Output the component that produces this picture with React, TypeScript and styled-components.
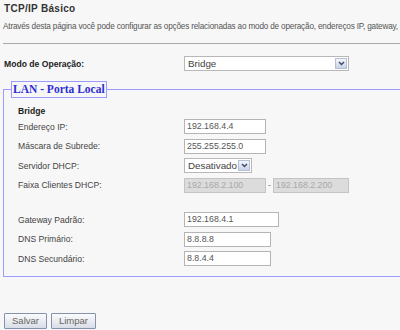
import { createGlobalStyle, styled } from 'styled-components'

const Global = createGlobalStyle`
  html, body {
    margin: 0;
    background: #f7f7f7;
    overflow: hidden;
  }
  body {
    font-family: "Liberation Sans", Arial, sans-serif;
    color: #444;
  }
`

const Page = styled.div`
  width: 600px;
  padding: 3px 0 0 3px;
`

const Title = styled.div`
  font-size: 10px;
  font-weight: bold;
  line-height: 12px;
  color: #333;
  letter-spacing: 0.3px;
  padding-left: 1px;
`

const Desc = styled.div`
  margin-top: 6px;
  font-size: 8.2px;
  letter-spacing: -0.18px;
  line-height: 12px;
  color: #555;
  white-space: nowrap;
`

const Rule = styled.div`
  margin-top: 10px;
  height: 1px;
  background: #a8a8a8;
`

const ModeRow = styled.div`
  margin-top: 11px;
  display: grid;
  grid-template-columns: 181px auto;
  align-items: center;
  height: 17px;
`

const BoldLabel = styled.div`
  font-size: 8.6px;
  font-weight: bold;
  color: #222;
  padding-left: 1px;
`

const Fieldset = styled.fieldset`
  margin: 9px 0 36px 0;
  padding: 7px 0 7px 14px;
  border: 1px solid #9c9cff;
  min-width: 0;
`

const Legend = styled.legend`
  margin-left: -7px;
  padding: 0 1px;
  border: 1px solid #9c9cff;
  font-family: "Liberation Serif", "Times New Roman", serif;
  font-size: 11.5px;
  font-weight: bold;
  line-height: 15px;
  color: #2e2ed6;
`

const Subtitle = styled.div`
  font-size: 8.6px;
  font-weight: bold;
  line-height: 12px;
  color: #222;
`

const Row = styled.div<{ $blank?: boolean }>`
  display: grid;
  grid-template-columns: 166px auto;
  align-items: center;
  height: ${p => (p.$blank ? '15px' : '19.5px')};
`

const Label = styled.div`
  font-size: 8.6px;
  color: #444;
`

const Field = styled.div`
  display: flex;
  align-items: center;
`

const Input = styled.div<{ $w: number; $disabled?: boolean }>`
  box-sizing: border-box;
  width: ${p => p.$w}px;
  height: 15px;
  padding: 0 2px;
  border: 1px solid ${p => (p.$disabled ? '#c4c4c4' : '#b4b4b4')};
  background: ${p => (p.$disabled ? '#dcdcdc' : '#fff')};
  color: ${p => (p.$disabled ? '#a8a8a8' : '#555')};
  font-size: 8.8px;
  line-height: 13px;
  white-space: nowrap;
`

const Dash = styled.span`
  width: 7px;
  text-align: center;
  font-size: 9px;
  color: #777;
`

const Select = styled.div<{ $w: number }>`
  box-sizing: border-box;
  width: ${p => p.$w}px;
  height: 15px;
  display: flex;
  align-items: center;
  justify-content: space-between;
  padding: 0 1px 0 3px;
  border: 1px solid #b8b8b8;
  background: #fff;
  color: #444;
  font-size: 9.8px;
`

const Arrow = styled.span`
  box-sizing: border-box;
  width: 12px;
  height: 11px;
  display: flex;
  align-items: center;
  justify-content: center;
  border: 1px solid #b6c0d4;
  background: linear-gradient(#f2f5fb, #c9d3e6);
`

const Buttons = styled.div`
  display: flex;
  gap: 4px;
  padding-left: 1px;
`

const Button = styled.button<{ $w: number }>`
  box-sizing: border-box;
  width: ${p => p.$w}px;
  height: 16px;
  padding: 0;
  border: 1px solid #8592ad;
  border-radius: 1px;
  background: linear-gradient(#fbfbfc, #d9dde6);
  color: #666;
  font-family: "Liberation Sans", Arial, sans-serif;
  font-size: 9.5px;
  line-height: 14px;
`

const Chevron = () => (
  <svg width="7" height="5" viewBox="0 0 7 5">
    <path d="M1 1 L3.5 3.5 L6 1" fill="none" stroke="#3a4a68" strokeWidth="1.4" />
  </svg>
)

const rows: { label: string; value: string; w: number }[] = [
  { label: 'Gateway Padrão:', value: '192.168.4.1', w: 95 },
  { label: 'DNS Primário:', value: '8.8.8.8', w: 87 },
  { label: 'DNS Secundário:', value: '8.8.4.4', w: 87 },
]

export default function App() {
  return (
    <Page>
      <Global />
      <Title>TCP/IP Básico</Title>
      <Desc>
        Através desta página você pode configurar as opções relacionadas ao modo de operação, endereços IP,
        gateway, DNS e DHCP.
      </Desc>
      <Rule />
      <ModeRow>
        <BoldLabel>Modo de Operação:</BoldLabel>
        <Select $w={165}>
          <span>Bridge</span>
          <Arrow>
            <Chevron />
          </Arrow>
        </Select>
      </ModeRow>
      <Fieldset>
        <Legend>LAN - Porta Local</Legend>
        <Subtitle>Bridge</Subtitle>
        <Row>
          <Label>Endereço IP:</Label>
          <Input $w={82}>192.168.4.4</Input>
        </Row>
        <Row>
          <Label>Máscara de Subrede:</Label>
          <Input $w={82}>255.255.255.0</Input>
        </Row>
        <Row>
          <Label>Servidor DHCP:</Label>
          <Select $w={68}>
            <span>Desativado</span>
            <Arrow>
              <Chevron />
            </Arrow>
          </Select>
        </Row>
        <Row>
          <Label>Faixa Clientes DHCP:</Label>
          <Field>
            <Input $w={82} $disabled>192.168.2.100</Input>
            <Dash>-</Dash>
            <Input $w={76} $disabled>192.168.2.200</Input>
          </Field>
        </Row>
        <Row $blank />
        {rows.map(r => (
          <Row key={r.label}>
            <Label>{r.label}</Label>
            <Input $w={r.w}>{r.value}</Input>
          </Row>
        ))}
      </Fieldset>
      <Buttons>
        <Button $w={43}>Salvar</Button>
        <Button $w={45}>Limpar</Button>
      </Buttons>
    </Page>
  )
}
